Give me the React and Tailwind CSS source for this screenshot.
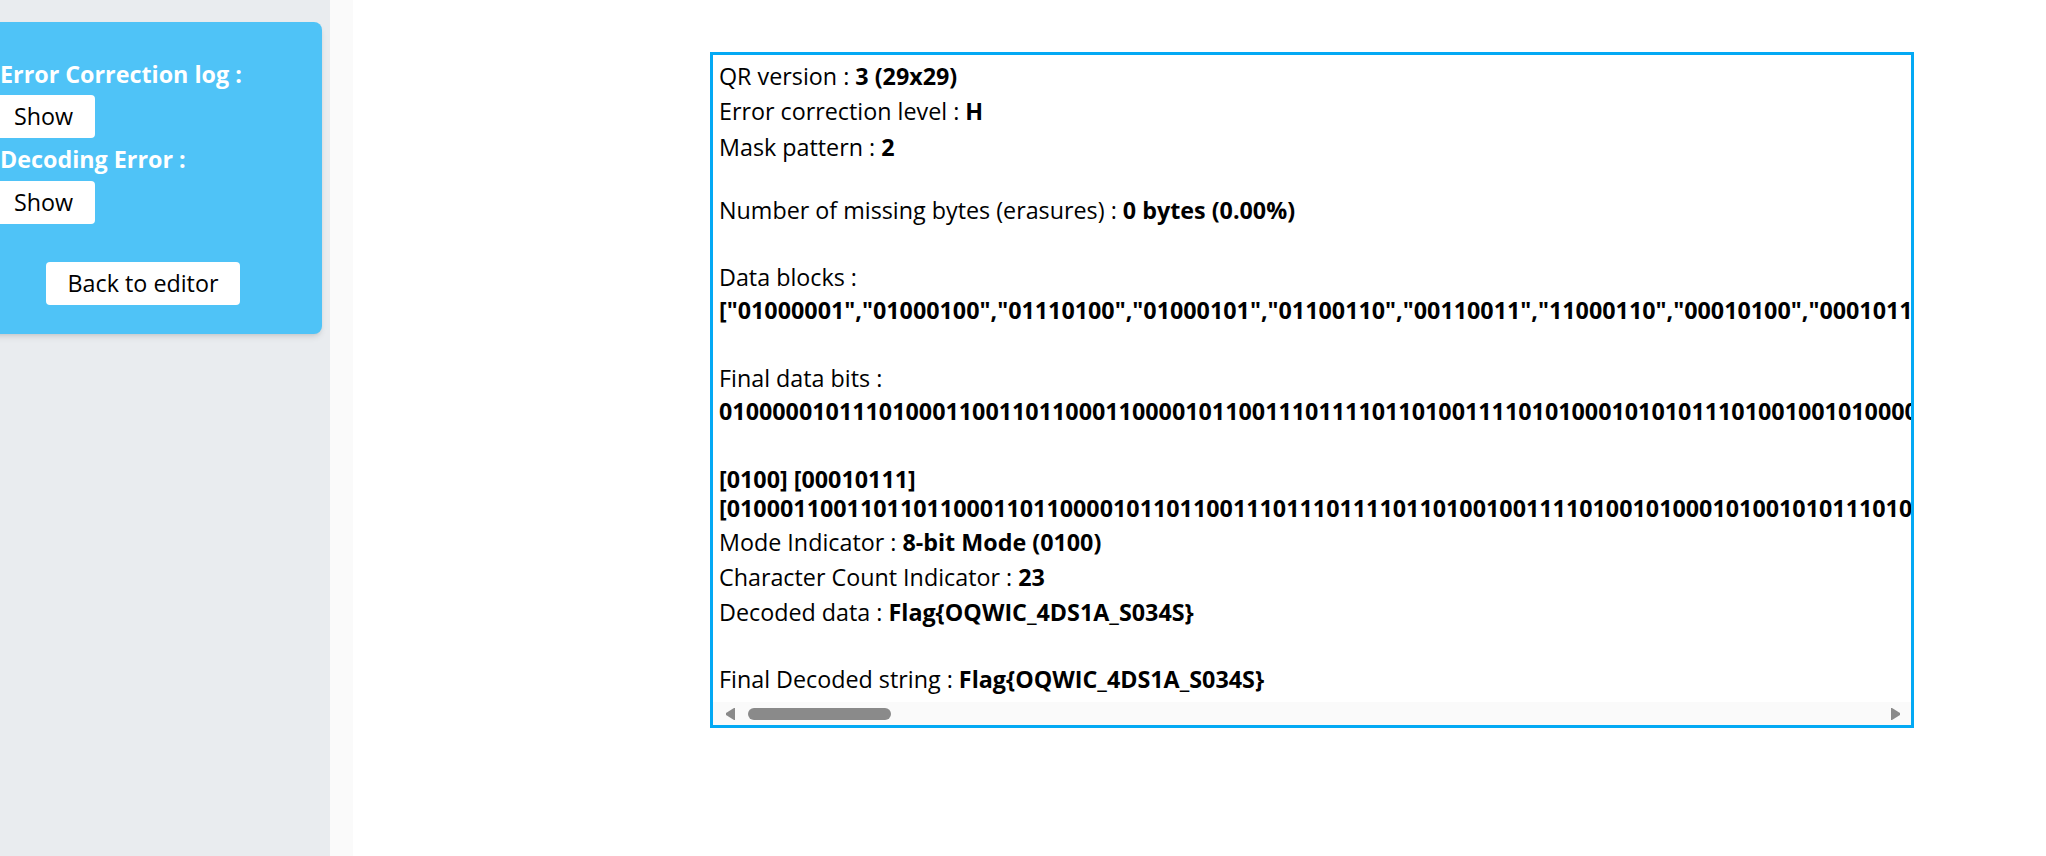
import React from "react";

// QR decode result page: sidebar with log toggles, main panel with the decode report.

function makeBits(seed, n) {
  let s = seed;
  let out = "";
  for (let i = 0; i < n; i++) {
    s = (s * 1103515245 + 12345) & 0x7fffffff;
    out += (s >> 16) & 1;
  }
  return out;
}

const BLOCKS = ["01000001", "01000100", "01110100", "01000101", "01100110", "00110011", "11000110", "00010100", "00010110"];
const moreBlocks = makeBits(7, 66 * 8).match(/.{8}/g);
const DATA_BLOCKS = "[" + [...BLOCKS, ...moreBlocks].map((b) => `"${b}"`).join(",") + "]";

const FINAL_BITS =
  "01000001011101000110011011000110000101100111" +
  "0111101101001111010100010101011101001001010000" +
  makeBits(19, 470);

const SEGMENT_BITS =
  "[01000110011011011000110110000101101100111011" +
  "10111101101001001111010010100010100101011101001" +
  makeBits(31, 500) +
  "]";

function Row({ gap = "", label, value }) {
  return (
    <div className={`whitespace-nowrap leading-[29px] ${gap}`}>
      {label}
      {value && <b className="font-bold">{value}</b>}
    </div>
  );
}

function SideButton({ children, className = "" }) {
  return (
    <button className={`rounded-[4px] bg-white h-[43px] px-[22px] text-[23.3px] text-black leading-none ${className}`}>
      {children}
    </button>
  );
}

function Arrow({ dir }) {
  return (
    <svg width="11" height="14" viewBox="0 0 11 14" className="shrink-0">
      {dir === "left" ? (
        <path d="M10 1 L10 13 L9 13 L1 8 L1 6 L9 1 Z" fill="#8a8a8a" />
      ) : (
        <path d="M1 1 L1 13 L2 13 L10 8 L10 6 L2 1 Z" fill="#8a8a8a" />
      )}
    </svg>
  );
}

export default function App() {
  return (
    <div className="flex h-[856px] w-full overflow-hidden font-['Open_Sans',sans-serif] text-black">
      <aside className="w-[330px] shrink-0 bg-[#e9ecef] pt-[22px]">
        <div className="ml-[-36px] w-[358px] rounded-[8px] bg-[#4fc3f7] pl-[36px] pt-[38px] pb-[29px] shadow-md">
          <div className="text-[23.3px] font-bold leading-[28px] text-white">Error Correction log :</div>
          <SideButton className="-ml-2 mt-[7px]">Show</SideButton>
          <div className="mt-[7px] text-[23.3px] font-bold leading-[28px] text-white">Decoding Error :</div>
          <SideButton className="-ml-2 mt-[8px]">Show</SideButton>
          <div className="mt-[38px] flex justify-center pr-[36px]">
            <SideButton>Back to editor</SideButton>
          </div>
        </div>
      </aside>
      <div className="w-[23px] shrink-0 bg-[#fafafa]" />
      <main className="flex-1 bg-white pl-[357px] pt-[52px]">
        <div className="flex h-[676px] w-[1204px] flex-col border-[3px] border-[#03a9f4] bg-white">
          <div className="flex-1 overflow-hidden pl-[6px] text-[23.3px]">
            <Row gap="mt-[7px]" label="QR version : " value="3 (29x29)" />
            <Row gap="mt-[6px]" label="Error correction level : " value="H" />
            <Row gap="mt-[7px]" label="Mask pattern : " value="2" />
            <Row gap="mt-[34px]" label="Number of missing bytes (erasures) : " value="0 bytes (0.00%)" />
            <Row gap="mt-[38px]" label="Data blocks :" />
            <Row gap="mt-[4px]" value={DATA_BLOCKS} />
            <Row gap="mt-[39px]" label="Final data bits :" />
            <Row gap="mt-[4px]" value={FINAL_BITS} />
            <Row gap="mt-[39px]" value="[0100] [00010111]" />
            <Row value={SEGMENT_BITS} />
            <Row gap="mt-[5px]" label="Mode Indicator : " value="8-bit Mode (0100)" />
            <Row gap="mt-[6px]" label="Character Count Indicator : " value="23" />
            <Row gap="mt-[6px]" label="Decoded data : " value="Flag{OQWIC_4DS1A_S034S}" />
            <Row gap="mt-[38px]" label="Final Decoded string : " value="Flag{OQWIC_4DS1A_S034S}" />
          </div>
          <div className="flex h-[23px] shrink-0 items-center bg-[#fafafa]">
            <div className="ml-[12px]">
              <Arrow dir="left" />
            </div>
            <div className="ml-[12px] h-[12px] w-[143px] rounded-full bg-[#8a8a8a]" />
            <div className="flex-1" />
            <div className="mr-[10px]">
              <Arrow dir="right" />
            </div>
          </div>
        </div>
      </main>
    </div>
  );
}
